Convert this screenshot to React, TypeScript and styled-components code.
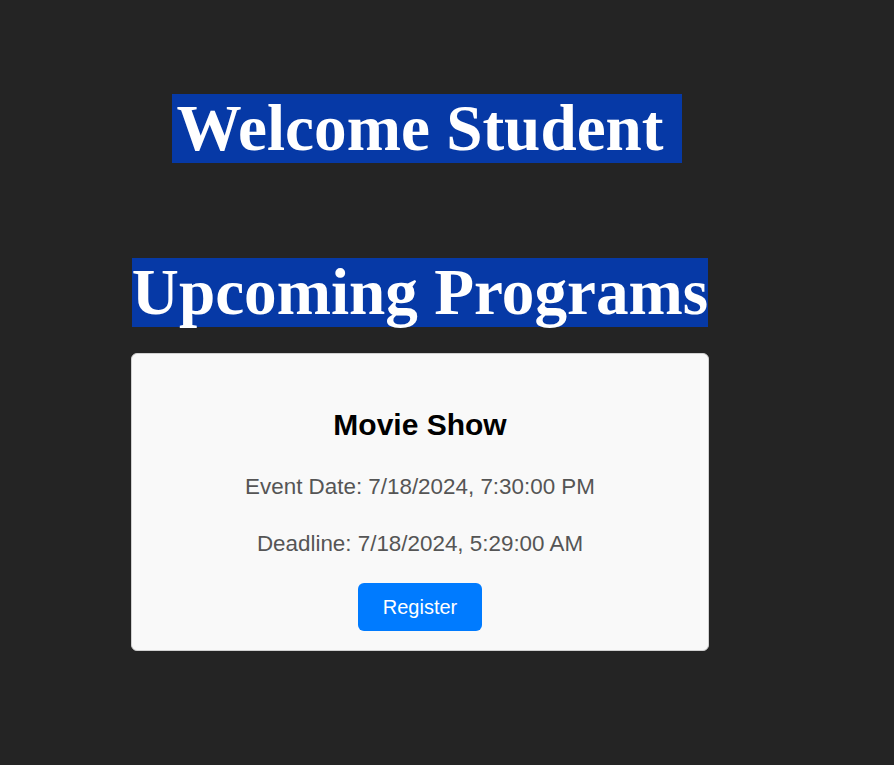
import React from "react";
import styled, { createGlobalStyle } from "styled-components";

const GlobalStyle = createGlobalStyle`
  html, body {
    margin: 0;
    padding: 0;
    background: #242424;
  }
  body {
    font-family: "Liberation Sans", Arial, sans-serif;
    line-height: 1.5;
    color: rgba(255, 255, 255, 0.87);
    min-height: 765px;
  }
`;

const Page = styled.main`
  display: flex;
  flex-direction: column;
  width: 578px;
  margin-left: 131px;
  padding-top: 94px;
`;

const Title = styled.h1<{ $spaceTop?: number }>`
  margin: ${(p) => p.$spaceTop ?? 0}px 0 0;
  text-align: center;
  font-family: "Liberation Serif", "Times New Roman", serif;
  font-weight: 700;
  font-size: 65.2px;
  line-height: 69px;
  white-space: nowrap;
`;

const Highlight = styled.span<{ $padLeft?: number; $padRight?: number }>`
  display: inline-block;
  height: 69px;
  background: #0639a6;
  color: #ffffff;
  padding: 0 ${(p) => p.$padRight ?? 0}px 0 ${(p) => p.$padLeft ?? 0}px;
  margin: 0 -${(p) => p.$padRight ?? 0}px 0 -${(p) => p.$padLeft ?? 0}px;
`;

const Card = styled.section`
  margin-top: 26px;
  background: #f9f9f9;
  border: 1px solid #d0d0d0;
  border-radius: 6px;
  padding: 20px 20px 19px;
  text-align: center;
`;

const EventName = styled.h2`
  margin: 28px 0 23px;
  font-size: 30px;
  font-weight: 700;
  color: #000000;
  line-height: 1.5;
`;

const Detail = styled.p`
  margin: 23px 0;
  font-size: 22.4px;
  color: #555555;
  line-height: 1.5;
`;

const RegisterButton = styled.button`
  display: inline-block;
  border: none;
  border-radius: 6px;
  background: #007bff;
  color: #ffffff;
  font-family: "Liberation Sans", Arial, sans-serif;
  font-size: 20px;
  line-height: normal;
  padding: 12.5px 24.5px;
  cursor: pointer;
`;

export default function App() {
  return (
    <>
      <GlobalStyle />
      <Page>
        <Title>
          <Highlight $padLeft={4} $padRight={18}>
            Welcome Student
          </Highlight>
        </Title>
        <Title $spaceTop={95}>
          <Highlight>Upcoming Programs</Highlight>
        </Title>
        <Card>
          <EventName>Movie Show</EventName>
          <Detail>Event Date: 7/18/2024, 7:30:00 PM</Detail>
          <Detail>Deadline: 7/18/2024, 5:29:00 AM</Detail>
          <RegisterButton>Register</RegisterButton>
        </Card>
      </Page>
    </>
  );
}
